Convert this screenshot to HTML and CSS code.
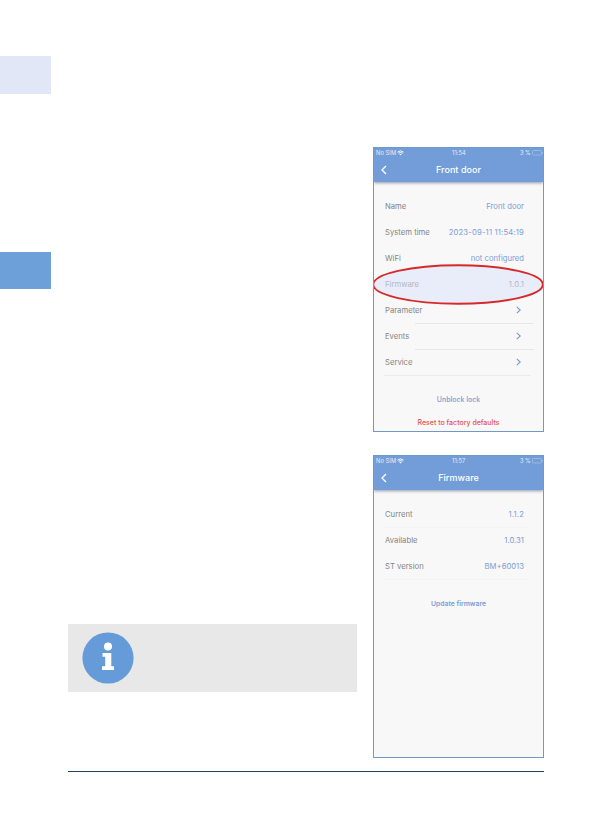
FILE: index.html
```html
<!DOCTYPE html>
<html lang="en">
<head>
<meta charset="utf-8">
<title>Firmware update</title>
<link rel="stylesheet" href="styles.css">
</head>
<body>
<main class="page">
  <aside class="tabs">
    <div class="tab tab-light"></div>
    <div class="tab tab-active"></div>
  </aside>
  <section class="content">
    <div class="columns">
      <div class="copy">
        <div class="note">
          <svg class="info" viewBox="0 0 52 52"><circle cx="26" cy="26" r="25.6" fill="#659bd8"/><circle cx="26" cy="14.6" r="4" fill="#fff"/><path d="M20.500 21h8.800v13.200H32V38H20v-3.800h3.200v-9.400h-2.700z" fill="#fff"/></svg>
        </div>
      </div>
      <div class="phones">
        <article class="phone phone-door">
          <header class="bar">
            <div class="status"><span class="sim">No SIM</span><svg class="wifi" viewBox="0 0 8 6"><path d="M.5 2Q4-.9 7.500 2M1.700 3.300Q4 1.500 6.300 3.300" fill="none" stroke="#fff" stroke-width="1.100"/><path d="M2.700 4.300Q4 3.300 5.300 4.300L4 5.800z" fill="#fff"/></svg><span class="clock">11:54</span><span class="charge">3 %</span><svg class="battery" viewBox="0 0 11 6"><rect x=".5" y=".5" width="9" height="4.500" rx="1" fill="none" stroke="#b2cbee" stroke-width=".6"/><path d="M10.500 2v1.500" stroke="#b2cbee" stroke-width=".6"/></svg></div>
            <div class="title"><svg class="back" viewBox="0 0 6 10"><path d="M5 1 1 5l4 4" fill="none" stroke="#fff" stroke-width="1.300"/></svg><h1>Front door</h1></div>
          </header>
          <dl class="rows">
            <div class="row"><dt>Name</dt><dd>Front door</dd></div>
            <div class="row"><dt>System time</dt><dd class="date">2023-09-11 11:54:19</dd></div>
            <div class="row"><dt>WiFi</dt><dd>not configured</dd></div>
            <div class="row muted"><svg class="ring" viewBox="0 0 172 41"><ellipse cx="86" cy="20.500" rx="84.800" ry="19.200" fill="#e9ecf9" stroke="#d5292c" stroke-width="1.900"/></svg><dt>Firmware</dt><dd class="version">1.0.1</dd></div>
            <div class="row line-inset"><dt>Parameter</dt><dd><svg class="next" viewBox="0 0 5 8"><path d="m.8.800 3.400 3.200L.8 7.200" fill="none" stroke="#7899d0" stroke-width="1.100"/></svg></dd></div>
            <div class="row line-inset"><dt>Events</dt><dd><svg class="next" viewBox="0 0 5 8"><path d="m.8.800 3.400 3.200L.8 7.200" fill="none" stroke="#7899d0" stroke-width="1.100"/></svg></dd></div>
            <div class="row line"><dt>Service</dt><dd><svg class="next" viewBox="0 0 5 8"><path d="m.8.800 3.400 3.200L.8 7.200" fill="none" stroke="#7899d0" stroke-width="1.100"/></svg></dd></div>
          </dl>
          <div class="actions"><span class="unblock">Unblock lock</span><span class="reset">Reset to factory defaults</span></div>
        </article>
        <article class="phone phone-firmware">
          <header class="bar">
            <div class="status"><span class="sim">No SIM</span><svg class="wifi" viewBox="0 0 8 6"><path d="M.5 2Q4-.9 7.500 2M1.700 3.300Q4 1.500 6.300 3.300" fill="none" stroke="#fff" stroke-width="1.100"/><path d="M2.700 4.300Q4 3.300 5.300 4.300L4 5.800z" fill="#fff"/></svg><span class="clock">11:57</span><span class="charge">3 %</span><svg class="battery" viewBox="0 0 11 6"><rect x=".5" y=".5" width="9" height="4.500" rx="1" fill="none" stroke="#b2cbee" stroke-width=".6"/><path d="M10.500 2v1.500" stroke="#b2cbee" stroke-width=".6"/></svg></div>
            <div class="title"><svg class="back" viewBox="0 0 6 10"><path d="M5 1 1 5l4 4" fill="none" stroke="#fff" stroke-width="1.300"/></svg><h1>Firmware</h1></div>
          </header>
          <dl class="rows">
            <div class="row faint"><dt>Current</dt><dd class="version">1.1.2</dd></div>
            <div class="row"><dt>Available</dt><dd>1.0.31</dd></div>
            <div class="row faint"><dt>ST version</dt><dd>BM+60013</dd></div>
          </dl>
          <div class="actions"><span class="update">Update firmware</span></div>
        </article>
      </div>
    </div>
    <hr class="rule">
  </section>
</main>
</body>
</html>
```

FILE: styles.css
```css
* { box-sizing: border-box; }
body { margin: 0; background: #fff; font-family: Inter, "Liberation Sans", sans-serif; }
.page { display: grid; grid-template-columns: 51px 476px; column-gap: 17px; height: 839px; overflow: hidden; }
.tabs { display: flex; flex-direction: column; gap: 158px; padding-top: 56px; }
.tab { height: 38px; }
.tab-light { background: #e1e7f7; }
.tab-active { background: #6d9fd9; height: 37px; }
.content { padding-top: 147px; }
.columns { display: grid; grid-template-columns: 289px 171px; column-gap: 16px; height: 611px; }
.copy { display: flex; flex-direction: column; justify-content: flex-end; padding-bottom: 66px; }
.note { height: 68px; background: #e8e8e8; display: flex; align-items: center; padding-left: 14px; }
.info { width: 52px; height: 52px; }
.phones { display: flex; flex-direction: column; gap: 23px; }
.phone { border: 1px solid #7199c8; background: #f8f8f8; overflow: hidden; }
.phone-door { height: 285px; }
.phone-firmware { height: 303px; }
.bar { height: 34px; background: #729dd8; color: #fff; box-shadow: 0 1px 3px #8c98aa; }
.status { display: grid; grid-template-columns: 21px 8px 1fr 12px 11px; align-items: center; height: 9px; padding-left: 2px; font-size: 5.7px; line-height: 9px; color: #e6eefa; white-space: nowrap; }
.sim { letter-spacing: .1px; }
.wifi { width: 7px; height: 6px; }
.clock { padding-left: 47px; letter-spacing: .1px; }
.battery { width: 11px; height: 6px; }
.title { display: grid; grid-template-columns: 6px 1fr 6px; align-items: center; height: 25px; padding: 0 7px; }
.back { width: 6px; height: 10px; }
h1 { margin: 0; text-align: center; font-size: 9px; font-weight: 500; line-height: 12px; letter-spacing: .05px; }
.rows { margin: 12px 0 0; }
.row { position: relative; display: flex; align-items: center; justify-content: space-between; height: 26px; padding: 0 19px 0 11px; font-size: 7.7px; line-height: 12px; color: #858585; white-space: nowrap; border-bottom: 1px solid transparent; }
.row dt, .row dd { position: relative; margin: 0; }
.row dd { color: #7d9dd4; }
.row .date { letter-spacing: .16px; }
.row .version { letter-spacing: .15px; }
.row.muted dt, .row.muted dd { color: #b1b9ca; }
.ring { position: absolute; left: -2px; top: -8px; width: 172px; height: 41px; }
.line-inset { border-image: linear-gradient(90deg, transparent 42px, #e5e7e8 42px, #e5e7e8 159px, transparent 159px) 1; }
.line { border-image: linear-gradient(90deg, transparent 11px, #eaebec 11px, #eaebec 156px, transparent 156px) 1; }
.faint { border-image: linear-gradient(90deg, transparent 11px, #f3f3f3 11px, #f3f3f3 152px, transparent 152px) 1; }
.next { display: block; width: 5px; height: 8px; margin: 0 3px 2px 0; }
.actions { display: flex; flex-direction: column; align-items: center; font-size: 7px; font-weight: 500; line-height: 10px; color: #789cd5; }
.phone-door .actions { padding-top: 19px; gap: 13px; }
.phone-firmware .actions { padding-top: 19px; font-weight: 600; font-size: 6.8px; }
.reset { color: #e35459; }
.rule { margin: 13px 0 0; border: 0; height: 1px; background: #233f5e; }
```
